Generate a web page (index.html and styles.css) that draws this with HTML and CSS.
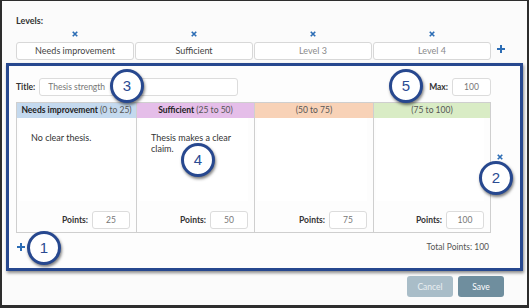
FILE: index.html
```html
<!DOCTYPE html>
<html lang="en">
<head>
    <meta charset="UTF-8">
    <meta name="viewport" content="width=device-width, initial-scale=1.0">
    <title>Rubric editor</title>
    <link rel="stylesheet" href="styles.css">
</head>
<body>
    <div class="frame">
        <div class="levels">
            <div class="levels-label">Levels:</div>
            <div class="levels-row">
                <div class="level">
                    <svg class="icon-x" viewBox="0 0 8 8"><path d="M1 1L7 7M7 1L1 7"/></svg>
                    <div class="level-box">Needs improvement</div>
                </div>
                <div class="level">
                    <svg class="icon-x" viewBox="0 0 8 8"><path d="M1 1L7 7M7 1L1 7"/></svg>
                    <div class="level-box">Sufficient</div>
                </div>
                <div class="level">
                    <svg class="icon-x" viewBox="0 0 8 8"><path d="M1 1L7 7M7 1L1 7"/></svg>
                    <div class="level-box placeholder">Level 3</div>
                </div>
                <div class="level">
                    <svg class="icon-x" viewBox="0 0 8 8"><path d="M1 1L7 7M7 1L1 7"/></svg>
                    <div class="level-box placeholder">Level 4</div>
                </div>
                <svg class="icon-plus add-level" viewBox="0 0 8 8"><path d="M4 0V8M0 4H8"/></svg>
            </div>
        </div>

        <div class="criterion">
            <div class="criterion-top">
                <span class="label">Title:</span>
                <div class="field title-field">Thesis strength</div>
                <span class="label max-label">Max:</span>
                <div class="field max-field">100</div>
            </div>

            <div class="table-wrap">
                <div class="rubric">
                    <div class="col">
                        <div class="col-head head-blue"><b>Needs improvement</b> (0 to 25)</div>
                        <div class="col-body">
                            <div class="desc">No clear thesis.</div>
                            <div class="points"><span class="label">Points:</span><div class="field pts-field">25</div></div>
                        </div>
                    </div>
                    <div class="col">
                        <div class="col-head head-pink"><b>Sufficient</b> (25 to 50)</div>
                        <div class="col-body">
                            <div class="desc">Thesis makes a clear claim.</div>
                            <div class="points"><span class="label">Points:</span><div class="field pts-field">50</div></div>
                        </div>
                    </div>
                    <div class="col">
                        <div class="col-head head-peach">(50 to 75)</div>
                        <div class="col-body">
                            <div class="desc"></div>
                            <div class="points"><span class="label">Points:</span><div class="field pts-field">75</div></div>
                        </div>
                    </div>
                    <div class="col">
                        <div class="col-head head-green">(75 to 100)</div>
                        <div class="col-body">
                            <div class="desc"></div>
                            <div class="points"><span class="label">Points:</span><div class="field pts-field">100</div></div>
                        </div>
                    </div>
                </div>
                <div class="side">
                    <svg class="icon-x" viewBox="0 0 8 8"><path d="M1 1L7 7M7 1L1 7"/></svg>
                </div>
            </div>

            <div class="criterion-foot">
                <svg class="icon-plus" viewBox="0 0 8 8"><path d="M4 0V8M0 4H8"/></svg>
                <span class="total">Total Points: 100</span>
            </div>
        </div>

        <div class="actions">
            <button class="btn btn-cancel">Cancel</button>
            <button class="btn btn-save">Save</button>
        </div>

        <!-- numbered callouts -->
        <div class="callout c1">1</div>
        <div class="callout c2">2</div>
        <div class="callout c3">3</div>
        <div class="callout c4">4</div>
        <div class="callout c5">5</div>
    </div>
</body>
</html>
```

FILE: styles.css
```css
html, body {
    margin: 0;
    padding: 0;
}
body {
    background: #2d2d2d;
    padding: 1px 2px 3px 2px;
    height: 308px;
    box-sizing: border-box;
    font-family: 'Lato', 'Open Sans', sans-serif;
    color: #333;
}
.frame {
    position: relative;
    background: #fbfbfb;
    height: 100%;
}

/* levels */
.levels {
    padding-left: 14px;
}
.levels-label {
    padding-top: 14px;
    font-size: 9px;
    line-height: 12px;
    font-weight: bold;
    height: 12px;
}
.levels-row {
    display: flex;
    gap: 1px;
    margin-top: 1px;
}
.level {
    width: 118px;
    display: flex;
    flex-direction: column;
    align-items: center;
}
.level .icon-x {
    margin: 3px 0 5px;
}
.level-box {
    width: 100%;
    height: 18px;
    box-sizing: border-box;
    border: 1px solid #d8d8d8;
    border-radius: 3px;
    background: #fff;
    font-size: 9px;
    line-height: 16px;
    text-align: center;
    color: #444;
}
.level-box.placeholder {
    color: #8a8a8a;
}
.icon-x {
    width: 6px;
    height: 6px;
    display: block;
}
.icon-x path {
    stroke: #2c6db5;
    stroke-width: 2.2;
    fill: none;
}
.icon-plus {
    width: 8px;
    height: 8px;
    display: block;
}
.icon-plus path {
    stroke: #2c6db5;
    stroke-width: 2;
    fill: none;
}
.add-level {
    align-self: flex-end;
    margin: 0 0 7px 5px;
}

/* criterion block */
.criterion {
    margin: 3px 4px 0 4px;
    height: 208px;
    box-sizing: border-box;
    border: 3px solid #27488f;
    box-shadow: 1px 2px 3px rgba(0, 0, 0, 0.45);
    background: #fdfdfd;
    padding: 12px 3px 0 7px;
}
.label {
    font-size: 8.5px;
    font-weight: bold;
    color: #333;
}
.field {
    height: 18px;
    box-sizing: border-box;
    border: 1px solid #dcdcdc;
    border-radius: 3px;
    background: #fff;
    font-size: 8.5px;
    line-height: 16px;
    color: #777;
}
.criterion-top {
    display: flex;
    align-items: center;
    gap: 4px;
    margin-right: 26px;
}
.title-field {
    width: 199px;
    padding-left: 8px;
}
.max-label {
    margin-left: auto;
}
.max-field {
    width: 39px;
    text-align: center;
}

.table-wrap {
    display: flex;
    margin-top: 6px;
}
.rubric {
    width: 475px;
    height: 131px;
    box-sizing: border-box;
    border: 1px solid #cfcfcf;
    display: grid;
    grid-template-columns: 119px 118px 119px 1fr;
}
.col {
    display: flex;
    flex-direction: column;
    border-left: 1px solid #cfcfcf;
}
.col:first-child {
    border-left: none;
}
.col-head {
    height: 15px;
    line-height: 15px;
    font-size: 8.5px;
    text-align: center;
    color: #555;
}
.col-head b {
    color: #222;
}
.head-blue { background: #c4d9ee; }
.head-pink { background: #e5bee9; }
.head-peach { background: #f8d2b7; }
.head-green { background: #d9ecc5; }
.col-body {
    flex: 1;
    padding: 0 6px 4px 2px;
    display: flex;
    flex-direction: column;
}
.desc {
    height: 83px;
    box-sizing: border-box;
    background: #fff;
    padding: 14px 10px 0 12px;
    font-size: 9px;
    line-height: 11px;
    color: #333;
}
.points {
    margin-top: 10px;
    display: flex;
    justify-content: flex-end;
    align-items: center;
    gap: 4px;
}
.pts-field {
    width: 38px;
    text-align: center;
}
.side {
    padding: 52px 0 0 6px;
}

.criterion-foot {
    display: flex;
    align-items: center;
    justify-content: space-between;
    padding: 8px 28px 0 1px;
}
.total {
    font-size: 8.5px;
    line-height: 12px;
    color: #555;
}

/* buttons */
.actions {
    display: flex;
    justify-content: flex-end;
    gap: 5px;
    margin: 5px 23px 0 0;
}
.btn {
    width: 46px;
    height: 21px;
    border: none;
    border-radius: 3px;
    font-family: inherit;
    font-size: 8.5px;
    color: #fff;
    padding: 0;
}
.btn-cancel { background: #a9bdc8; color: #e9eff2; }
.btn-save { background: #6f8e9e; }

/* callouts over the screenshot */
.callout {
    position: absolute;
    width: 34px;
    height: 34px;
    box-sizing: border-box;
    border: 3px solid #27488f;
    border-radius: 50%;
    background: #fff;
    box-shadow: 1px 2px 3px rgba(0, 0, 0, 0.5);
    font-family: 'Liberation Sans', sans-serif;
    font-size: 15px;
    line-height: 28px;
    text-align: center;
    color: #2b4c93;
}
.c1 { left: 25px; top: 230px; }
.c2 { left: 477px; top: 160px; }
.c3 { left: 108px; top: 68px; }
.c4 { left: 179px; top: 142px; }
.c5 { left: 387px; top: 68px; }
```
